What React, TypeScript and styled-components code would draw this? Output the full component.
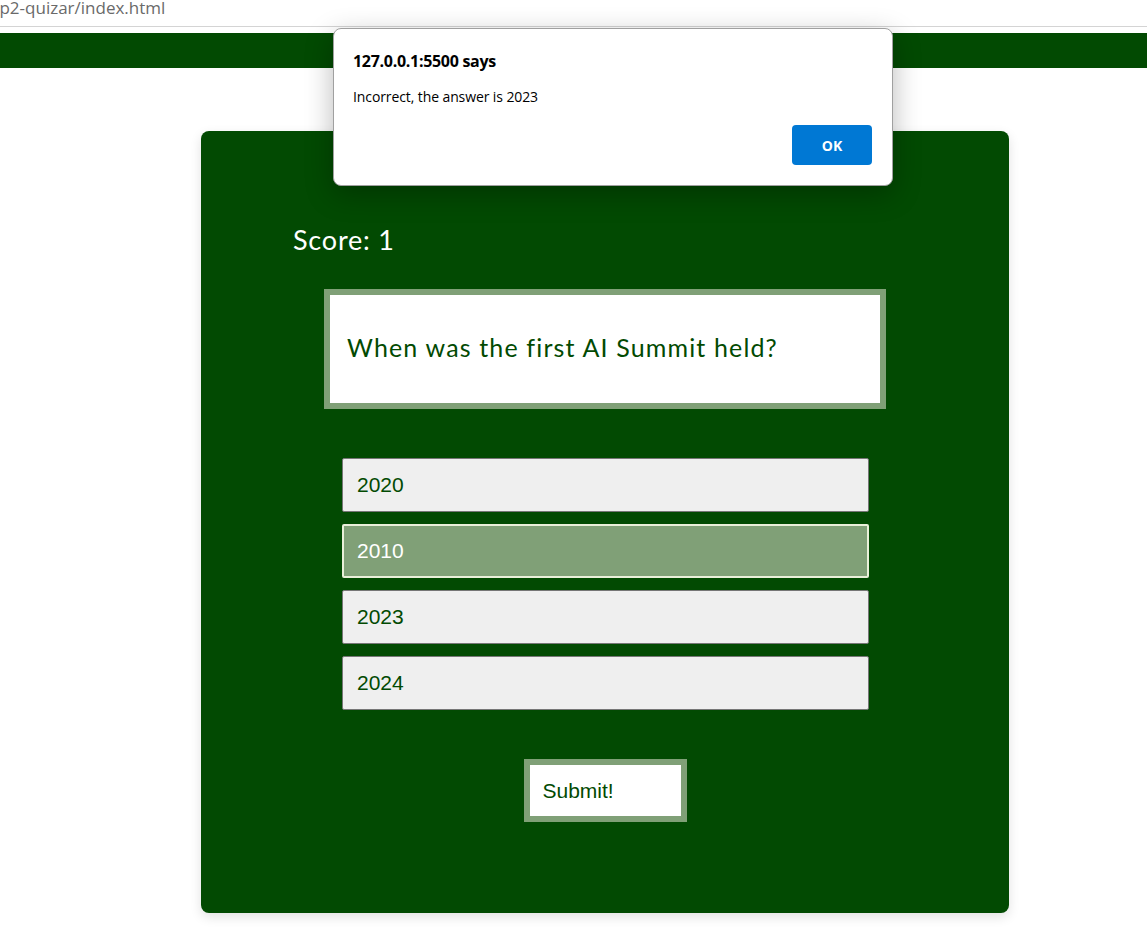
import * as React from "react";
import styled, { createGlobalStyle } from "styled-components";

const GlobalStyle = createGlobalStyle`
  html, body {
    margin: 0;
    padding: 0;
    background: #ffffff;
  }
  body {
    font-family: "Liberation Sans", Arial, sans-serif;
  }
`;

const GREEN = "#024a02";
const SAGE = "#80a077";

const Styled = {
  Page: styled.div`
    position: relative;
    width: 1147px;
    min-height: 936px;
    background: #ffffff;
  `,
  UrlStrip: styled.div`
    height: 27px;
    border-bottom: 1px solid #d4d4d4;
    box-sizing: border-box;
    overflow: hidden;
    display: flex;
    align-items: flex-start;
  `,
  UrlText: styled.span`
    font-family: "Open Sans", "Noto Sans", sans-serif;
    font-size: 17px;
    line-height: 18px;
    color: #6a6a6a;
    margin-left: -6px;
    margin-top: -1px;
  `,
  Header: styled.header`
    margin-top: 6px;
    height: 35px;
    background: ${GREEN};
  `,
  Main: styled.main`
    padding: 63px 0 22px 201px;
  `,
  Card: styled.section`
    width: 808px;
    height: 782px;
    box-sizing: border-box;
    background: ${GREEN};
    border-radius: 8px;
    box-shadow: 0 4px 12px rgba(0, 0, 0, 0.12);
    padding: 92px 0 0 92px;
    display: flex;
    flex-direction: column;
  `,
  Score: styled.h2`
    margin: 0;
    font-family: "Lato", "Open Sans", sans-serif;
    font-weight: 400;
    font-size: 27px;
    line-height: 34px;
    color: #ffffff;
    letter-spacing: 0.8px;
  `,
  QuestionBox: styled.div`
    margin: 32px 0 0 31px;
    width: 562px;
    height: 120px;
    box-sizing: border-box;
    border: 6px solid ${SAGE};
    background: #ffffff;
    display: flex;
    align-items: center;
    padding: 0 0 4px 17px;
  `,
  QuestionText: styled.p`
    margin: 0;
    font-family: "Lato", "Open Sans", sans-serif;
    font-size: 25px;
    color: ${GREEN};
    letter-spacing: 1.15px;
  `,
  Answers: styled.div`
    margin: 49px 0 0 49px;
    width: 527px;
    display: flex;
    flex-direction: column;
    gap: 12px;
  `,
  Answer: styled.button<{ $selected?: boolean }>`
    height: 54px;
    box-sizing: border-box;
    text-align: left;
    padding: 0 0 0 ${(p) => (p.$selected ? "13px" : "14px")};
    font-family: "Liberation Sans", Arial, sans-serif;
    font-size: 21px;
    border-radius: 2px;
    cursor: pointer;
    background: ${(p) => (p.$selected ? SAGE : "#efefef")};
    color: ${(p) => (p.$selected ? "#ffffff" : GREEN)};
    border: ${(p) => (p.$selected ? "2px solid #e9efd9" : "1px solid #767676")};
  `,
  SubmitRow: styled.div`
    margin-top: 49px;
    width: 624px;
    display: flex;
    justify-content: center;
  `,
  Submit: styled.button`
    width: 163px;
    height: 63px;
    box-sizing: border-box;
    border: 6px solid ${SAGE};
    background: #ffffff;
    text-align: left;
    padding: 0 0 0 13px;
    font-family: "Liberation Sans", Arial, sans-serif;
    font-size: 21px;
    color: ${GREEN};
    cursor: pointer;
  `,
  Dialog: styled.div`
    position: absolute;
    left: 333px;
    top: 28px;
    width: 560px;
    height: 158px;
    box-sizing: border-box;
    background: #ffffff;
    border: 1px solid #a0a0a0;
    border-radius: 8px;
    box-shadow: 0 8px 28px rgba(0, 0, 0, 0.28);
    padding: 21px 20px 20px 19px;
    display: flex;
    flex-direction: column;
    font-family: "Open Sans", "Noto Sans", sans-serif;
    color: #000000;
  `,
  DialogTitle: styled.div`
    font-weight: 700;
    font-size: 16px;
    line-height: 22px;
    letter-spacing: -0.3px;
  `,
  DialogMessage: styled.div`
    margin-top: 15px;
    font-size: 14px;
    line-height: 20px;
    letter-spacing: -0.1px;
  `,
  DialogFooter: styled.div`
    margin-top: auto;
    display: flex;
    justify-content: flex-end;
  `,
  OkButton: styled.button`
    width: 80px;
    height: 40px;
    border: none;
    border-radius: 4px;
    background: #0078d4;
    color: #ffffff;
    font-family: "Open Sans", "Noto Sans", sans-serif;
    font-weight: 700;
    font-size: 14px;
    cursor: pointer;
  `,
};

const answers = ["2020", "2010", "2023", "2024"];

const App = () => {
  const [selected, setSelected] = React.useState<string>("2010");

  return (
    <Styled.Page>
      <GlobalStyle />
      <Styled.UrlStrip>
        <Styled.UrlText>-p2-quizar/index.html</Styled.UrlText>
      </Styled.UrlStrip>
      <Styled.Header />
      <Styled.Main>
        <Styled.Card>
          <Styled.Score>Score: 1</Styled.Score>
          <Styled.QuestionBox>
            <Styled.QuestionText>When was the first AI Summit held?</Styled.QuestionText>
          </Styled.QuestionBox>
          <Styled.Answers>
            {answers.map((a) => (
              <Styled.Answer
                key={a}
                $selected={a === selected}
                onClick={() => setSelected(a)}
              >
                {a}
              </Styled.Answer>
            ))}
          </Styled.Answers>
          <Styled.SubmitRow>
            <Styled.Submit>Submit!</Styled.Submit>
          </Styled.SubmitRow>
        </Styled.Card>
      </Styled.Main>
      <Styled.Dialog role="alertdialog">
        <Styled.DialogTitle>127.0.0.1:5500 says</Styled.DialogTitle>
        <Styled.DialogMessage>Incorrect, the answer is 2023</Styled.DialogMessage>
        <Styled.DialogFooter>
          <Styled.OkButton>OK</Styled.OkButton>
        </Styled.DialogFooter>
      </Styled.Dialog>
    </Styled.Page>
  );
};

export default App;
